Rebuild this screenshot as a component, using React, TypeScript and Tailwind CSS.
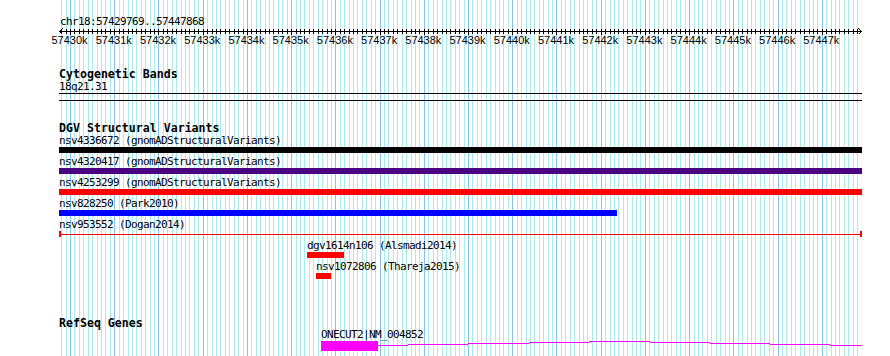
import React from 'react';

// genome coordinate -> screen x (view 57429769..57447868)
const bpToX = (bp: number) => 822.3 + (bp - 57447000) * 0.04422;

const gridLines = Array.from({ length: 181 }, (_, i) => 57429800 + i * 100);
const majorTicks = Array.from({ length: 18 }, (_, i) => 57430000 + i * 1000);

const intron: [number, number, number][] = [
  [0, 30, 4],
  [30, 90, 3],
  [90, 151, 2],
  [151, 211, 1],
  [211, 272, 0],
  [272, 332, 1],
  [332, 392, 2],
  [392, 452, 3],
  [452, 484, 4],
];

const mono = "font-['DejaVu_Sans_Mono',monospace] text-[11px] leading-[12px] tracking-[-0.62px] text-black whitespace-pre";
const title = "font-['DejaVu_Sans_Mono',monospace] font-bold text-[11.6px] leading-[12px] text-black whitespace-pre";

const Grid: React.FC = () => (
  <svg className="absolute inset-0" width={890} height={356} shapeRendering="crispEdges">
    {gridLines.map((bp) => {
      const x = Math.floor(bpToX(bp)) + 0.5;
      const major = bp % 1000 === 0;
      return (
        <line key={bp} x1={x} x2={x} y1={0} y2={356} stroke={major ? '#88c2ec' : '#aeeaea'} strokeWidth={1} />
      );
    })}
  </svg>
);

const Ruler: React.FC = () => (
  <svg width={890} height={18} shapeRendering="crispEdges" className="block">
    <line x1={59} x2={862} y1={3.5} y2={3.5} stroke="#000" />
    <polyline points="62.5,0.5 59.5,3.5 62.5,6.5" fill="none" stroke="#000" />
    <polyline points="858.5,0.5 861.5,3.5 858.5,6.5" fill="none" stroke="#000" />
    {gridLines.map((bp) => {
      const x = Math.floor(bpToX(bp)) + 0.5;
      const major = bp % 1000 === 0;
      return <line key={bp} x1={x} x2={x} y1={1} y2={major ? 7 : 6} stroke="#000" />;
    })}
    {majorTicks.map((bp) => (
      <text
        key={bp}
        x={bpToX(bp) - 1}
        y={15.5}
        textAnchor="middle"
        fontFamily="'Liberation Sans', Arial, sans-serif"
        fontSize={11}
        fill="#000"
      >
        {Math.round(bp / 1000)}k
      </text>
    ))}
  </svg>
);

const VariantRow: React.FC<{ label: string; color: string; width: number }> = ({ label, color, width }) => (
  <div className="flex flex-col pl-[59px] mb-[3px]">
    <div className={mono}>{label}</div>
    <div className="h-[6px]" style={{ width, backgroundColor: color }} />
  </div>
);

const App: React.FC = () => {
  return (
    <div className="relative w-[890px] h-[356px] overflow-hidden bg-white">
      <Grid />
      <div className="relative flex flex-col pt-[16px]">
        <div className={`${mono} pl-[60px]`}>chr18:57429769..57447868</div>

        <Ruler />

        {/* cytogenetic bands */}
        <div className={`${title} pl-[59px] mt-[22px]`}>Cytogenetic Bands</div>
        <div className={`${mono} pl-[59px] mt-[1px]`}>18q21.31</div>
        <div className="ml-[59px] w-[803px] h-[8px] border-y border-black" />

        {/* DGV structural variants */}
        <div className={`${title} pl-[59px] mt-[21px] mb-[1px]`}>DGV Structural Variants</div>
        <VariantRow label="nsv4336672 (gnomADStructuralVariants)" color="#000000" width={803} />
        <VariantRow label="nsv4320417 (gnomADStructuralVariants)" color="#4b0082" width={803} />
        <VariantRow label="nsv4253299 (gnomADStructuralVariants)" color="#ff0000" width={803} />
        <VariantRow label="nsv828250 (Park2010)" color="#0000ff" width={558} />
        <div className="flex flex-col pl-[59px]">
          <div className={mono}>nsv953552 (Dogan2014)</div>
          <div className="flex items-center w-[803px] h-[6px]">
            <div className="w-[2px] h-[6px] bg-[#ff0000]" />
            <div className="flex-1 h-[1px] bg-[#ff0000]" />
            <div className="w-[2px] h-[6px] bg-[#ff0000]" />
          </div>
        </div>

        <div className="flex flex-col pl-[307px] mt-[3px]">
          <div className={mono}>dgv1614n106 (Alsmadi2014)</div>
          <div className="w-[37px] h-[6px] bg-[#ff0000]" />
        </div>
        <div className="flex flex-col pl-[316px] mt-[3px]">
          <div className={mono}>nsv1072806 (Thareja2015)</div>
          <div className="w-[15px] h-[6px] bg-[#ff0000]" />
        </div>

        {/* RefSeq genes */}
        <div className={`${title} pl-[59px] mt-[38px]`}>RefSeq Genes</div>
        <div className={`${mono} pl-[321px]`}>ONECUT2|NM_004852</div>
        <div className="flex pl-[321px]">
          <div className="w-[57px] h-[10px] bg-[#ff00ff]" />
          <svg width={484} height={10} shapeRendering="crispEdges" className="block">
            {intron.map(([a, b, y]) => (
              <rect key={a} x={a} y={y} width={b - a} height={1} fill="#ff00ff" />
            ))}
          </svg>
        </div>
      </div>
    </div>
  );
};

export default App;
